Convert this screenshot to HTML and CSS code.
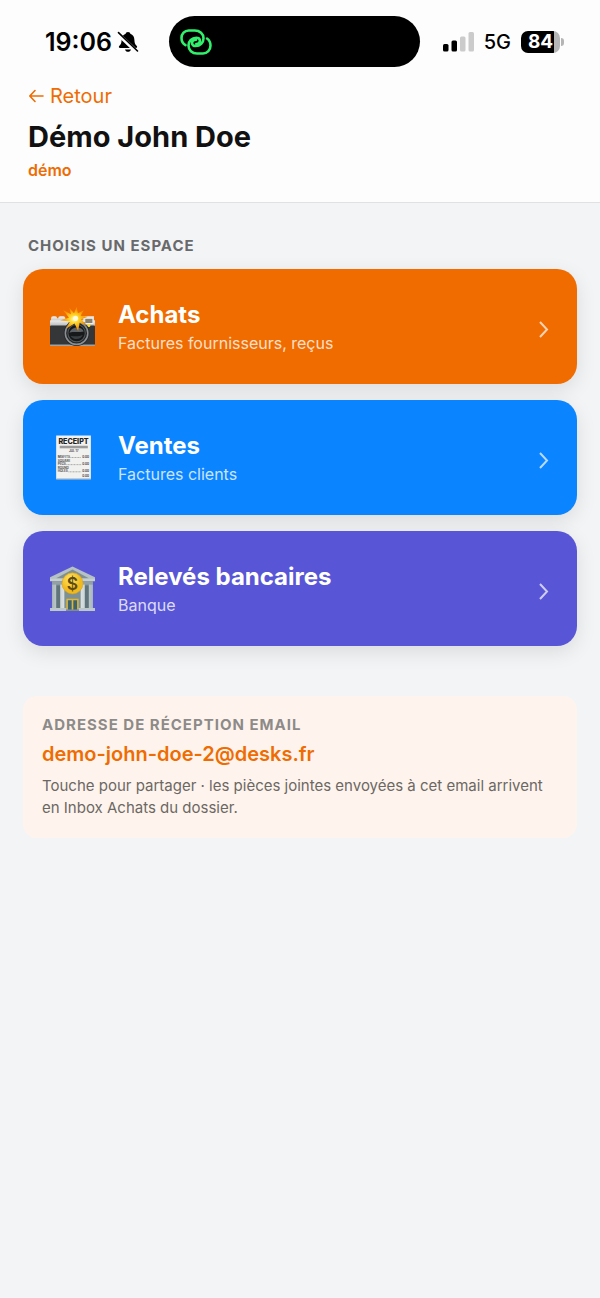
FILE: index.html
```html
<!DOCTYPE html>
<html lang="fr">
<head>
<meta charset="utf-8">
<meta name="viewport" content="width=device-width, initial-scale=1">
<title>Démo John Doe</title>
<link rel="stylesheet" href="styles.css">
</head>
<body>
<header class="header">
  <div class="status">
    <div class="status-left">
      <span class="clock">19:06</span>
      <svg class="bell" viewBox="0 0 22 22" aria-hidden="true">
        <path d="M11 1c-1.500 0-2.200.8-2.300 1.800C6 3.700 4.700 6 4.600 9c-.1 3.200-.7 4.400-2.200 5.700-1 .9-.6 2.300.8 2.300h15.600c1.400 0 1.800-1.400.8-2.300-1.500-1.300-2.100-2.500-2.200-5.700-.1-3-1.400-5.300-4.100-6.200C13.200 1.800 12.500 1 11 1zM8 18.400c.5 1.500 1.600 2.300 3 2.300s2.500-.8 3-2.300z" fill="#000"/>
        <path d="M.5 2.500l20 19" stroke="#fdfdfd" stroke-width="4"/>
        <path d="M1.500 1.600l19 18.400" stroke="#000" stroke-width="1.600" stroke-linecap="round"/>
      </svg>
    </div>
    <div class="island">
      <svg class="link-icon" viewBox="0 0 32 26" fill="none" stroke="#30f06c" stroke-width="2.600" stroke-linecap="round" aria-hidden="true">
        <path d="M5.500 16.200C2.700 14.500 1.500 11.700 1.500 8.900 1.500 4.800 4.500 1.500 8.700 1.500h6.100c5 0 8.700 3.200 8.700 7.700 0 4.500-3.500 7.800-7.800 7.800-2.300 0-3.700-1.300-3.700-3 0-1.900 1.600-3.200 4-3.200"/>
        <path d="M27 9.500c2.500 1.700 3.500 4.300 3.500 7 0 4.500-3.200 8-7.500 8h-6c-4.900 0-8.500-3.400-8.500-8 0-4.300 3.400-7.700 7.700-7.700 2.300 0 3.700 1.300 3.700 3 0 1.900-1.400 3.200-3.600 3.200"/>
      </svg>
    </div>
    <div class="status-right">
      <svg class="signal" viewBox="0 0 31 20" aria-hidden="true">
        <rect x="0" y="12" width="5.500" height="7.500" rx="1.500"/>
        <rect x="8.500" y="8.500" width="5.500" height="11" rx="1.500"/>
        <rect x="17" y="4.500" width="5.500" height="15" rx="1.500" fill="#cbcbcb"/>
        <rect x="25.500" y="0" width="5.500" height="19.500" rx="1.500" fill="#cbcbcb"/>
      </svg>
      <span class="network">5G</span>
      <span class="battery"><span class="battery-level">84</span></span>
    </div>
  </div>
  <div class="heading">
    <a class="back" href="#"><svg class="back-arrow" viewBox="0 0 16 14" fill="none" stroke="currentColor" stroke-width="1.600" stroke-linecap="round" stroke-linejoin="round" aria-hidden="true"><path d="M15 7H2M7 1.500L1.800 7 7 12.500"/></svg>Retour</a>
    <h1 class="title">Démo John Doe</h1>
    <p class="tag">démo</p>
  </div>
</header>
<main class="main">
  <h2 class="section-label">Choisis un espace</h2>
  <nav class="spaces">
    <button class="space space-purchases" type="button">
      <svg class="space-icon" viewBox="0 0 46 46" aria-hidden="true">
        <defs>
          <linearGradient id="silver" x2="0" y2="1"><stop stop-color="#eee"/><stop offset="1" stop-color="#a9a9a9"/></linearGradient>
          <radialGradient id="flash"><stop stop-color="#fffbd0"/><stop offset=".3" stop-color="#ffdc30"/><stop offset=".8" stop-color="#f79400"/><stop offset="1" stop-color="#f79400"/></radialGradient>
        </defs>
        <g transform="translate(0 3)">
        <path d="M2 12q0-2 2-2h2q2 0 2 2h1q0-2 2-2h3q2 0 2 2v5H2zM33 10h11v8H33z" fill="url(#silver)"/>
        <rect x="1" y="14" width="44" height="7" fill="url(#silver)"/>
        <rect x="1" y="19" width="44" height="20" rx="1" fill="#343638"/>
        <path d="M1 37.500h44V39H1z" fill="#a0a4a5"/>
        <path d="M35 12h8v5h-8z" fill="#8b8069" stroke="#eee"/>
        <circle cx="39" cy="19" r="1.500" fill="#ffdf22"/>
        <circle cx="27" cy="26.500" r="12.500" fill="#242628"/>
        <circle cx="27" cy="26.500" r="11" fill="none" stroke="#8b8f92" stroke-width="1.500"/>
        <circle cx="27" cy="26.500" r="8.500" fill="#161819" stroke="#55595b"/>
        <path d="M20 26c2-6 12-7 14-1-4 1-10 0-14 1z" fill="#5d6266"/>
        <path d="M21 29c4 1 9 1 12-1-1 5-9 6-12 1z" fill="#3a3e40"/>
        <path d="M27 1l1.300 6L34 4l-3 5.500 7 1-6.500 2.500 5.500 6-7-3-1.500 8.500L25 17l-8 5 3.500-7-9.500-1 8.500-2.500L14 4l7.500 4L20 2l4.500 5z" fill="url(#flash)"/>
        <circle cx="26" cy="12" r="2.500" fill="#fffbe0"/>
        </g>
      </svg>
      <span class="space-text"><span class="space-name">Achats</span><span class="space-detail">Factures fournisseurs, reçus</span></span>
      <svg class="chevron" viewBox="0 0 10 17" aria-hidden="true"><path d="M1 1l7 7.500L1 16"/></svg>
    </button>
    <button class="space space-sales" type="button">
      <svg class="space-icon" viewBox="0 0 46 46" aria-hidden="true">
        <path d="M7 1.500h34V44H7z" fill="#f1f1ef"/>
        <path d="M7 43h34v1.500H7z" fill="#c5cbd1"/>
        <text class="receipt-title" x="24" y="10">RECEIPT</text>
        <path d="M10.500 11.500H38v2.500H10.500z" fill="#9a9a9a"/>
        <g class="receipt-line">
          <text x="19.500" y="17.500">JUL 17</text>
          <text x="8.500" y="23.500">MISFITS</text><text x="32.500" y="23.500">0.00</text>
          <text x="8.500" y="27.500">SQUARE</text><text x="8.500" y="30.500">PEGS</text><text x="32.500" y="30.500">0.00</text>
          <text x="8.500" y="34.500">ROUND</text><text x="8.500" y="37.500">HOLES</text><text x="32.500" y="37.500">0.00</text>
          <text x="32.500" y="42">0.00</text>
        </g>
        <path d="M21 23h10.500M17 30h14.500M19 37h12.500" stroke="#777" stroke-width=".6" stroke-dasharray="1 .5"/>
      </svg>
      <span class="space-text"><span class="space-name">Ventes</span><span class="space-detail">Factures clients</span></span>
      <svg class="chevron" viewBox="0 0 10 17" aria-hidden="true"><path d="M1 1l7 7.500L1 16"/></svg>
    </button>
    <button class="space space-bank" type="button">
      <svg class="space-icon" viewBox="0 0 46 46" aria-hidden="true">
        <defs>
          <radialGradient id="coin" cx=".4" cy=".3"><stop stop-color="#ffe765"/><stop offset="1" stop-color="#f0b91d"/></radialGradient>
          <linearGradient id="column"><stop stop-color="#a9b7bb"/><stop offset=".5" stop-color="#fff"/><stop offset="1" stop-color="#a9b7bb"/></linearGradient>
        </defs>
        <path d="M3 16h40v27H3z" fill="#7d9094"/>
        <path d="M23 1.500L1 12v2h44v-2z" fill="#b5c1c3"/>
        <path d="M23 4.500L7 13h32z" fill="#7e9094"/>
        <path d="M1 13.500h44v2.500H1z" fill="#c6cfcf"/>
        <path d="M3 16h40v3H3z" fill="#91a1a5"/>
        <path d="M7 20h4v22H7zM35 20h4v22h-4z" fill="#60757b"/>
        <path d="M3 19h4v23H3zM11 19h4v23h-4zM31 19h4v23h-4zM39 19h4v23h-4z" fill="url(#column)"/>
        <path d="M17 33h12v11H17z" fill="#dfb638"/>
        <path d="M18.500 34.500h3.700V44h-3.700zM23.800 34.500h3.700V44h-3.700z" fill="#3c6571"/>
        <path d="M1 42h16v3H1zM29 42h16v3H29z" fill="#bdc8c9"/>
        <path d="M17 43.500h12V45H17z" fill="#7d8d91"/>
        <circle cx="23" cy="18" r="10.300" fill="url(#coin)" stroke="#d9a51b" stroke-width=".6"/>
        <text class="coin-sign" x="23" y="24">$</text>
      </svg>
      <span class="space-text"><span class="space-name">Relevés bancaires</span><span class="space-detail">Banque</span></span>
      <svg class="chevron" viewBox="0 0 10 17" aria-hidden="true"><path d="M1 1l7 7.500L1 16"/></svg>
    </button>
  </nav>
  <button class="inbox" type="button">
    <span class="inbox-label">Adresse de réception email</span>
    <span class="inbox-address">demo-john-doe-2@desks.fr</span>
    <span class="inbox-help">Touche pour partager · les pièces jointes envoyées à cet email arrivent en Inbox Achats du dossier.</span>
  </button>
</main>
</body>
</html>
```
FILE: styles.css
```css
* { box-sizing: border-box; }
body {
  margin: 0;
  min-height: 100vh;
  background: #f3f4f6;
  color: #111;
  font-family: Inter, "Liberation Sans", sans-serif;
}
.header {
  background: #fdfdfd;
  border-bottom: 1px solid #e0e1e3;
  padding-bottom: 22px;
}
.status {
  display: grid;
  grid-template-columns: 1fr 251px 1fr;
  align-items: center;
  padding: 16px 36px 0 25px;
  color: #000;
}
.status-left, .status-right {
  display: flex;
  align-items: center;
}
.status-left { gap: 5px; padding-left: 20px; }
.status-right { justify-content: flex-end; gap: 10px; }
.clock { font-size: 25px; font-weight: 600; line-height: 30px; }
.bell { width: 22px; height: 22px; }
.island {
  height: 51px;
  border-radius: 26px;
  background: #000;
  display: flex;
  align-items: center;
  padding-left: 11px;
}
.link-icon { width: 32px; height: 26px; }
.signal { width: 31px; height: 20px; }
.network { font-size: 20px; font-weight: 500; line-height: 24px; }
.battery {
  position: relative;
  width: 39px;
  height: 22px;
  border-radius: 7px;
  background: linear-gradient(90deg, #000 84%, #b5b5b5 84%);
  color: #fff;
  text-align: center;
  margin-right: 4px;
}
.battery::after {
  content: "";
  position: absolute;
  left: 100%;
  top: 7px;
  width: 3px;
  height: 8px;
  margin-left: 1px;
  border-radius: 0 3px 3px 0;
  background: #b5b5b5;
}
.battery-level { display: block; font-size: 19px; font-weight: 700; line-height: 22px; }
.heading {
  display: flex;
  flex-direction: column;
  align-items: flex-start;
  padding: 17px 28px 0;
}
.back {
  display: flex;
  align-items: center;
  gap: 6px;
  color: #ee6c02;
  font-size: 20px;
  line-height: 24px;
  text-decoration: none;
}
.back-arrow { width: 16px; height: 14px; }
.title { margin: 10px 0 0; font-size: 29px; line-height: 38px; font-weight: 700; }
.tag { margin: 4px 0 0; color: #ee6c02; font-size: 16px; line-height: 20px; font-weight: 600; }
.main { padding: 33px 23px 40px; }
.section-label {
  margin: 0 0 13px;
  padding: 0 5px;
  font-size: 15px;
  line-height: 20px;
  font-weight: 700;
  letter-spacing: 1px;
  text-transform: uppercase;
  color: #68696b;
}
.spaces { display: flex; flex-direction: column; gap: 16px; }
.space {
  display: flex;
  align-items: center;
  gap: 22px;
  width: 100%;
  min-height: 115px;
  padding: 24px 28px 24px 26px;
  border: 0;
  border-radius: 20px;
  box-shadow: 0 6px 20px rgba(0, 0, 0, 0.1);
  color: #fff;
  font-family: inherit;
  text-align: left;
  cursor: pointer;
}
.space-purchases { background: #f06c00; }
.space-sales { background: #0a84ff; }
.space-bank { background: #5856d6; }
.space-icon { flex: none; width: 47px; height: 47px; }
.space-text { flex: 1; display: flex; flex-direction: column; gap: 1px; }
.space-name { font-size: 24px; line-height: 32px; font-weight: 700; }
.space-detail { font-size: 16px; line-height: 22px; color: rgba(255, 255, 255, 0.8); }
.chevron {
  flex: none;
  width: 10px;
  height: 17px;
  margin-top: 5px;
  fill: none;
  stroke: rgba(255, 255, 255, 0.7);
  stroke-width: 2;
}
.receipt-title { font-size: 7px; font-weight: 800; text-anchor: middle; fill: #222; }
.receipt-line { font-size: 3px; font-weight: 600; fill: #333; }
.coin-sign { font-size: 17px; font-weight: 600; text-anchor: middle; fill: #5d4a13; }
.inbox {
  display: flex;
  flex-direction: column;
  gap: 5px;
  width: 100%;
  margin-top: 50px;
  padding: 19px;
  border: 0;
  border-radius: 14px;
  background: #fff4ed;
  font-family: inherit;
  text-align: left;
  cursor: pointer;
}
.inbox-label {
  font-size: 15px;
  line-height: 20px;
  font-weight: 700;
  letter-spacing: 1px;
  text-transform: uppercase;
  color: #8d8b89;
}
.inbox-address { font-size: 20px; line-height: 28px; font-weight: 600; color: #ee6c02; }
.inbox-help { margin-top: 2px; font-size: 15px; line-height: 22px; color: #6b6864; }
```
